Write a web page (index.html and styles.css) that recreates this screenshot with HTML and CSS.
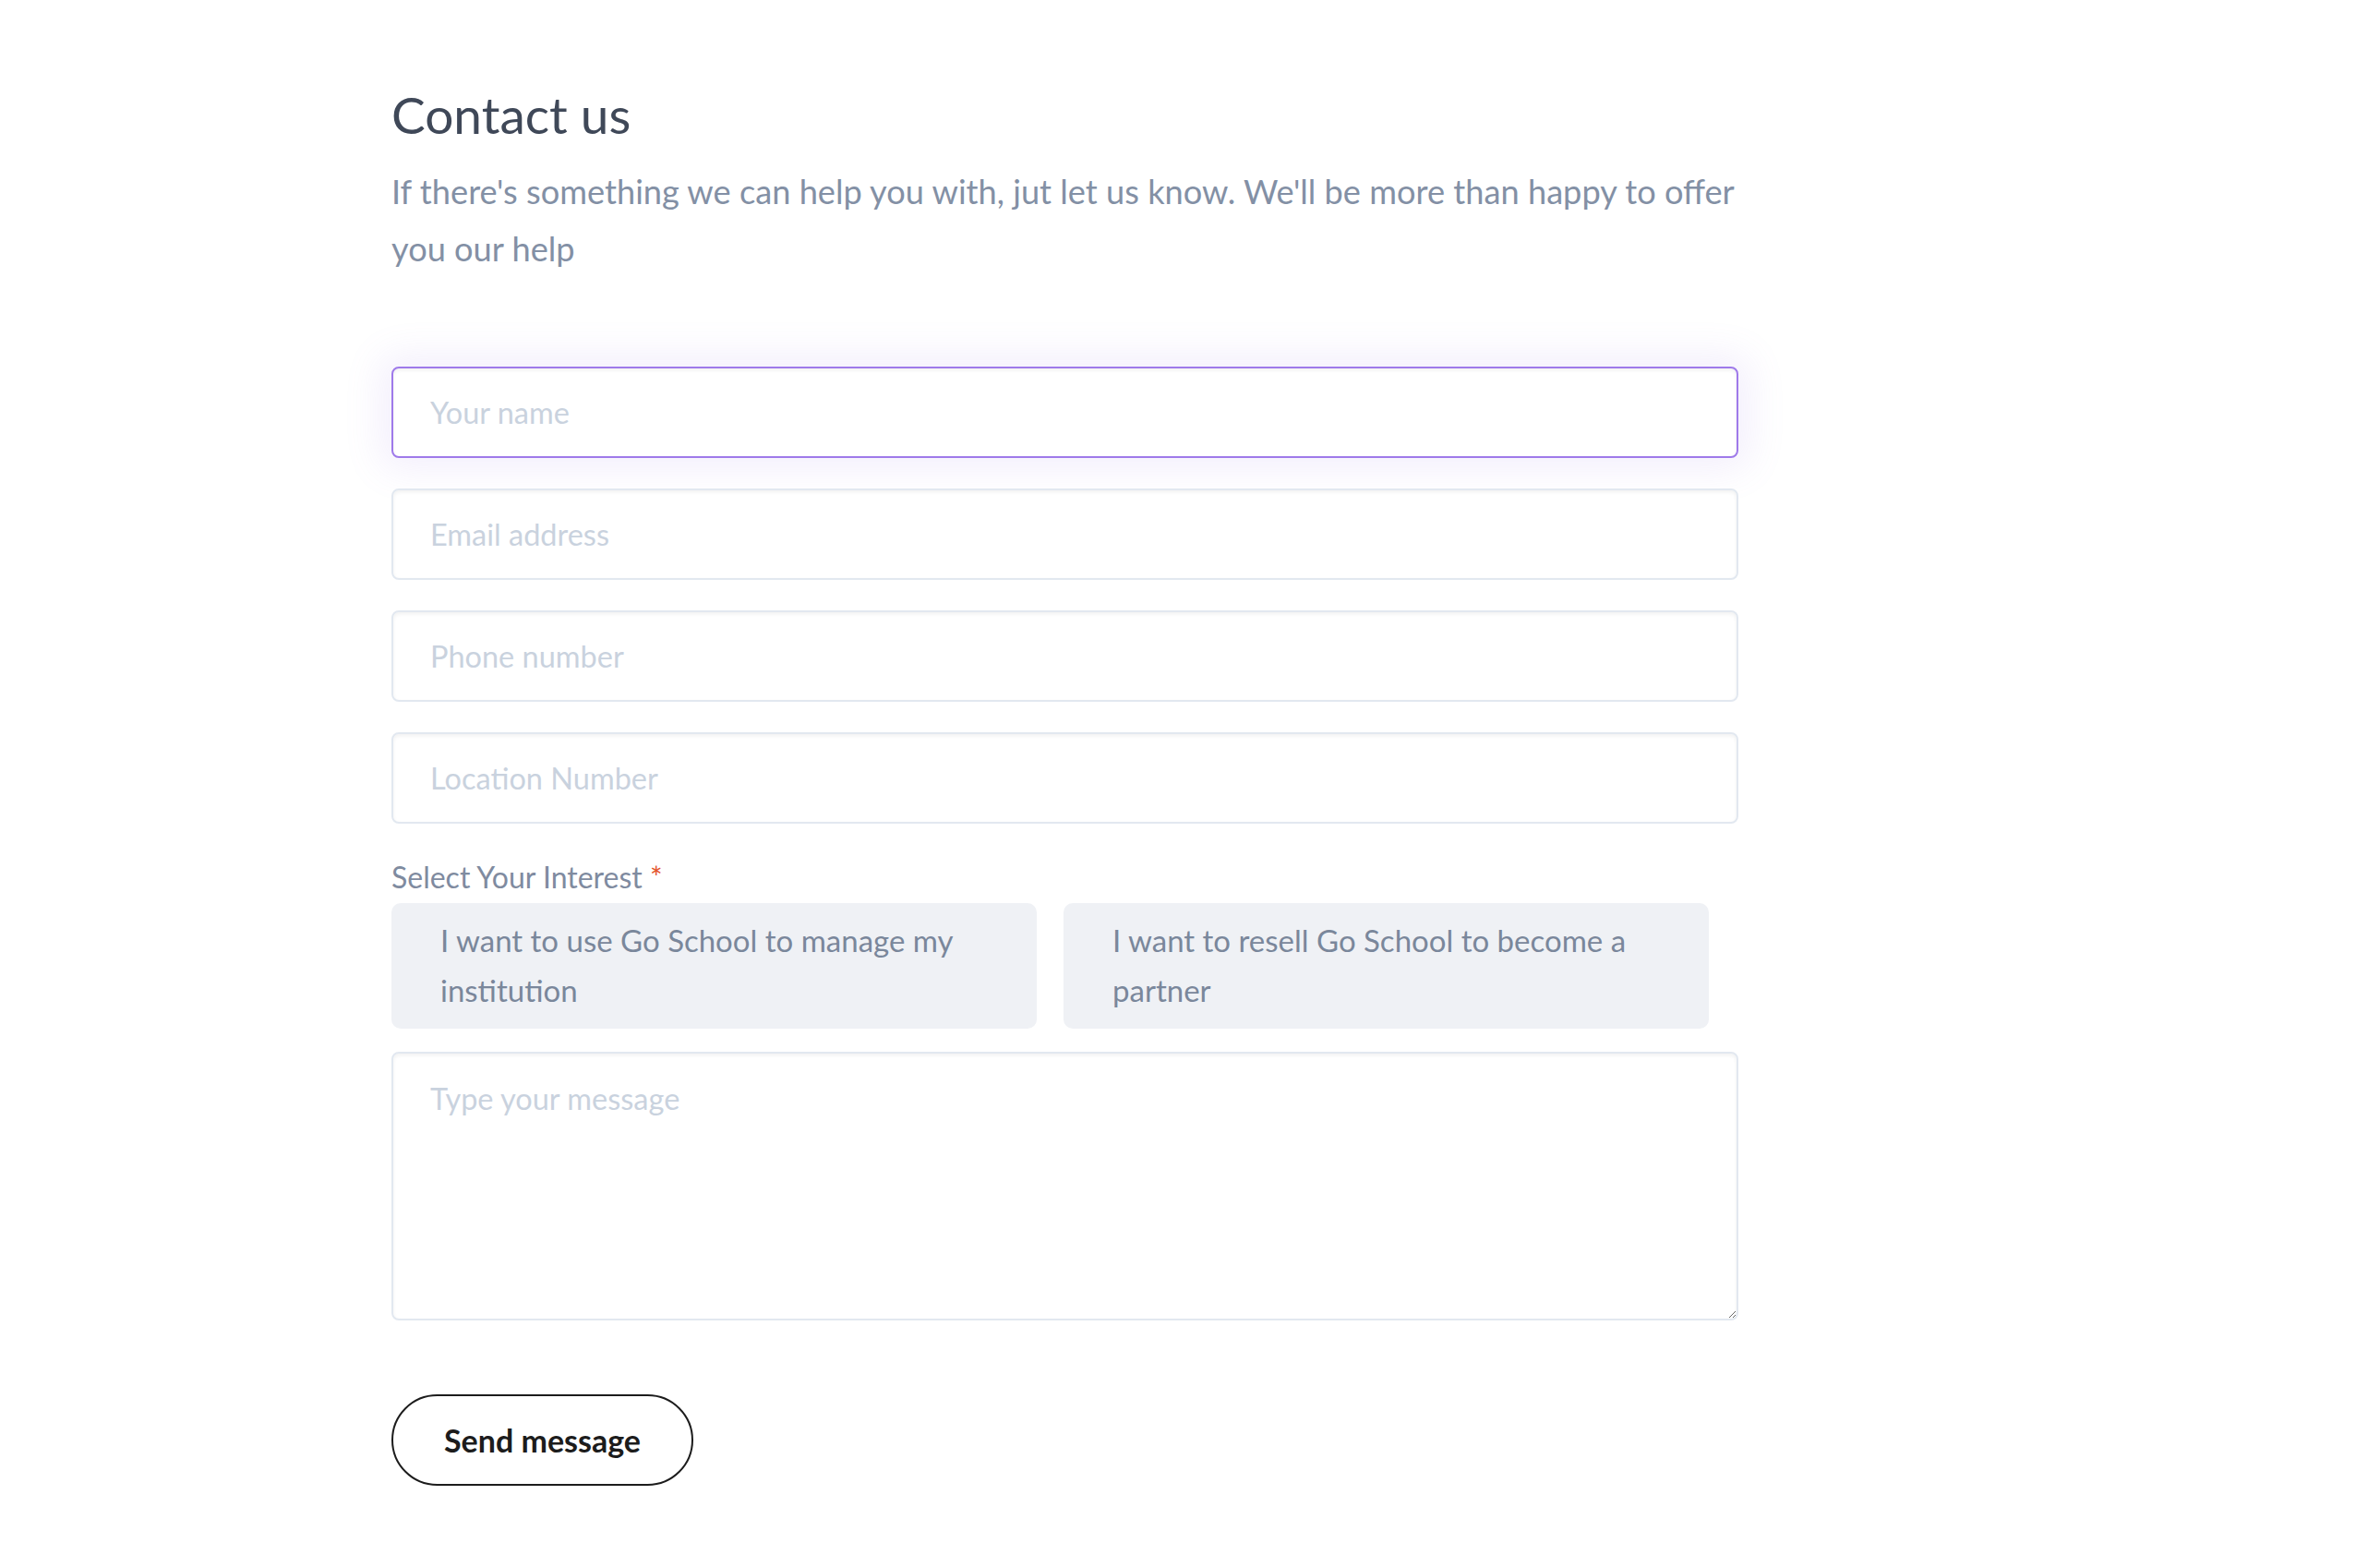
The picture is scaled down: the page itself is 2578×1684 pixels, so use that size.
FILE: index.html
```html
<!DOCTYPE html>
<html lang="en">
<head>
<meta charset="utf-8">
<title>Contact us</title>
<link rel="stylesheet" href="styles.css">
</head>
<body>
<main class="page">
  <section class="contact">
    <h1 class="title">Contact us</h1>
    <p class="lead">If there's something we can help you with, jut let us know. We'll be more than happy to offer you our help</p>
    <form class="form">
      <input class="field field--focus" type="text" placeholder="Your name">
      <input class="field" type="email" placeholder="Email address">
      <input class="field" type="tel" placeholder="Phone number">
      <input class="field" type="text" placeholder="Location Number">
      <div class="interest">
        <div class="interest__label">Select Your Interest <span class="req">*</span></div>
        <div class="options">
          <div class="option">I want to use Go School to manage my institution</div>
          <div class="option">I want to resell Go School to become a partner</div>
        </div>
      </div>
      <textarea class="field field--area" placeholder="Type your message"></textarea>
      <button class="send" type="button">Send message</button>
    </form>
  </section>
</main>
</body>
</html>
```

FILE: styles.css
```css
html, body {
  margin: 0;
  padding: 0;
  background: #ffffff;
}

body {
  font-family: "Lato", "Open Sans", "Liberation Sans", sans-serif;
}

.page {
  padding: 92px 0 60px 424px;
}

.contact {
  width: 1459px;
}

.title {
  margin: 0;
  font-size: 55px;
  line-height: 64px;
  font-weight: 400;
  color: #3f4858;
}

.lead {
  margin: 20px 0 0;
  font-size: 36.2px;
  line-height: 62px;
  color: #8390a5;
}

.form {
  display: flex;
  flex-direction: column;
  align-items: flex-start;
  margin-top: 97px;
}

.field {
  box-sizing: border-box;
  display: block;
  width: 100%;
  height: 99px;
  margin: 0 0 33px;
  padding: 0 40px;
  border: 2px solid #e2e8f0;
  border-radius: 8px;
  background: #ffffff;
  box-shadow: inset 0 2px 4px rgba(0, 0, 0, 0.06);
  font-family: inherit;
  font-size: 32.5px;
  color: #4a5568;
  outline: none;
}

.field::placeholder {
  color: #c9d2de;
}

.field--focus {
  border-color: #9f7aea;
  box-shadow: inset 0 2px 4px rgba(0, 0, 0, 0.06), 0 0 40px 12px rgba(159, 122, 234, 0.12);
}

.field--area {
  height: 291px;
  padding: 25px 40px;
  line-height: 48px;
  resize: vertical;
}

.interest {
  width: 100%;
  margin-bottom: 25px;
}

.interest__label {
  font-size: 32px;
  line-height: 44px;
  color: #7f8ba0;
  margin: 3px 0 6px;
}

.req {
  color: #e4542a;
}

.options {
  display: flex;
  gap: 29px;
}

.option {
  box-sizing: border-box;
  width: 699px;
  padding: 13px 53px 15px;
  border-radius: 10px;
  background: #eff1f5;
  font-size: 33px;
  line-height: 54px;
  color: #7a879b;
}

.send {
  box-sizing: border-box;
  margin-top: 47px;
  width: 327px;
  height: 99px;
  border: 2px solid #1c1c1c;
  border-radius: 999px;
  background: #ffffff;
  font-family: inherit;
  font-size: 34px;
  font-weight: 700;
  color: #1c1c1c;
  cursor: pointer;
}
```
